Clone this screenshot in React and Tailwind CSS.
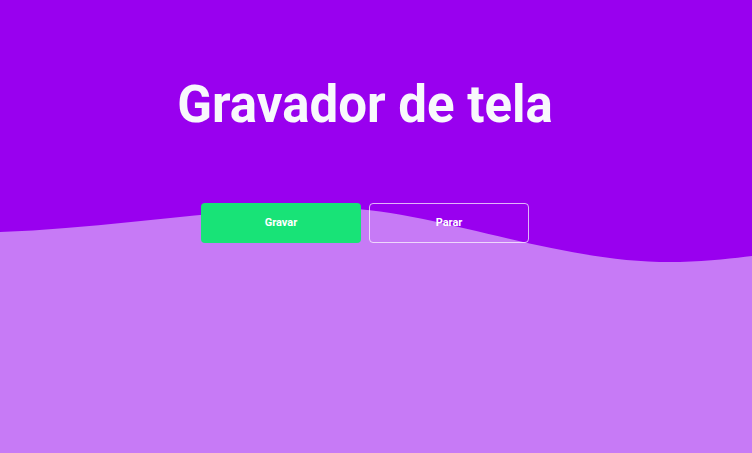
export default function App() {
  return (
    <div className="relative w-[752px] h-[453px] overflow-hidden bg-[#9900ef]" style={{ fontFamily: "Roboto, 'Liberation Sans', sans-serif" }}>
      <svg className="absolute inset-0" width="752" height="453" viewBox="0 0 752 453">
        <path d="M0,232 C120,228 240,205 340,208 C440,211 560,265 680,262 C710,261 735,258 752,256 L752,453 L0,453 Z" fill="#c77af6" />
      </svg>
      <div className="relative flex flex-col items-center pr-[22px] pt-[79px]">
        <h1 className="text-[51px] leading-none font-bold text-[#f8f8fc]">Gravador de tela</h1>
        <div className="mt-[73px] flex gap-2">
          <button className="w-40 h-10 rounded bg-[#18e377] text-white text-[11px] font-bold">Gravar</button>
          <button className="w-40 h-10 rounded border border-white/70 text-white text-[11px] font-bold">Parar</button>
        </div>
      </div>
    </div>
  );
}
